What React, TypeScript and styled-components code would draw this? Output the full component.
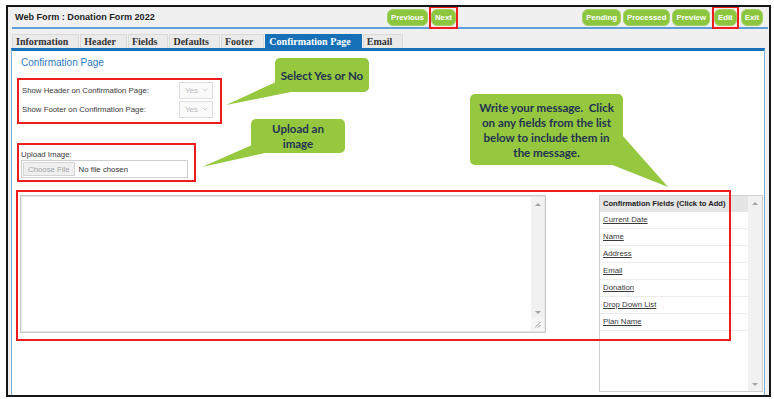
import React from 'react';
import styled, { createGlobalStyle } from 'styled-components';
import { ChevronDown } from 'lucide-react';

const GlobalStyle = createGlobalStyle`
  html, body {
    margin: 0;
    padding: 0;
    background: #fff;
  }
  body {
    font-family: 'Liberation Sans', Arial, sans-serif;
  }
`;

const Frame = styled.div`
  box-sizing: border-box;
  width: 765px;
  height: 392px;
  margin: 5px 0 0 6px;
  border: 2px solid #161616;
  background: #f0f0f0;
  overflow: hidden;
  display: flex;
  flex-direction: column;
`;

const TopBar = styled.div`
  display: flex;
  align-items: center;
  height: 20px;
  margin: 0 1px 0 4px;
  padding-right: 5px;
  border-bottom: 2px solid #5d9fd6;
`;

const FormTitle = styled.div`
  box-sizing: border-box;
  flex: 0 0 375px;
  padding-left: 3px;
  font-size: 9.1px;
  font-weight: bold;
  color: #1d1d1d;
`;

const ButtonGroup = styled.div<{ $gap?: number; $push?: boolean }>`
  display: flex;
  align-items: center;
  gap: ${(p) => p.$gap ?? 2}px;
  margin-left: ${(p) => (p.$push ? 'auto' : '0')};
`;

const GreenButton = styled.span`
  display: inline-flex;
  align-items: center;
  box-sizing: border-box;
  height: 17px;
  padding: 0 3px;
  border-radius: 6px;
  background: #8cc63f;
  border: 1px solid #a6d267;
  color: #fff;
  font-size: 7.8px;
  font-weight: bold;
`;

const Marked = styled.span`
  display: inline-flex;
  padding: 1px 0;
  border: 2px solid #ee1d1d;
`;

const Tabs = styled.div`
  display: flex;
  margin: 5px 0 0 4px;
`;

const Tab = styled.div<{ $active?: boolean }>`
  height: 14px;
  line-height: 14px;
  padding: 0 10px 0 3px;
  margin-right: 1px;
  box-sizing: border-box;
  background: ${(p) => (p.$active ? '#1570b8' : '#eaeaea')};
  border: 1px solid ${(p) => (p.$active ? '#1570b8' : '#dadada')};
  border-bottom: none;
  color: ${(p) => (p.$active ? '#fff' : '#333')};
  font-family: 'Liberation Serif', 'Times New Roman', serif;
  font-weight: bold;
  font-size: 10px;
`;

const Panel = styled.div`
  position: relative;
  flex: 1;
  margin: 0 4px 0 3px;
  background: #fff;
  border-top: 3px solid #1570b8;
  border-left: 1px solid #7cb3de;
  border-right: 1px solid #7cb3de;
  display: flex;
  flex-direction: column;
`;

const PageTitle = styled.div`
  margin: 6px 0 9px 9px;
  font-size: 10px;
  line-height: 12px;
  color: #2f7bbf;
`;

const Annotated = styled.div<{ $w: number; $h: number }>`
  box-sizing: border-box;
  width: ${(p) => p.$w}px;
  height: ${(p) => p.$h}px;
  margin-left: 5px;
  border: 2px solid #ee1d1d;
`;

const SettingsBox = styled(Annotated)`
  padding: 1px 7px 0 3px;
  display: flex;
  flex-direction: column;
  gap: 1px;
`;

const SettingRow = styled.div`
  display: flex;
  align-items: center;
  height: 18px;
`;

const Label = styled.span`
  flex: 1;
  font-size: 7.8px;
  color: #3a3a3a;
`;

const SelectBox = styled.div`
  box-sizing: border-box;
  width: 34px;
  height: 17px;
  display: flex;
  align-items: center;
  justify-content: space-between;
  padding: 0 3px 0 5px;
  border: 1px solid #dedede;
  background: #fafafa;
  font-size: 8px;
  color: #b8b8b8;
`;

const UploadBox = styled(Annotated)`
  margin-top: 19px;
  padding: 4px 0 0 2px;
`;

const UploadLabel = styled.div`
  font-size: 7.8px;
  line-height: 11px;
  color: #3a3a3a;
`;

const FileInput = styled.div`
  box-sizing: border-box;
  width: 167px;
  height: 18px;
  display: flex;
  align-items: center;
  gap: 4px;
  border: 1px solid #cfcfcf;
  padding: 0 1px;
  font-size: 7.8px;
  color: #333;
`;

const FileButton = styled.span`
  box-sizing: border-box;
  height: 14px;
  display: inline-flex;
  align-items: center;
  padding: 0 4px;
  border: 1px solid #d4d4d4;
  background: #efefef;
  color: #a4a4a4;
`;

const BottomRow = styled.div`
  position: relative;
  flex: 1;
  display: flex;
  align-items: flex-start;
  margin-top: 13px;
`;

const BigMark = styled.div`
  position: absolute;
  left: 4px;
  top: -5px;
  width: 715px;
  height: 151px;
  box-sizing: border-box;
  border: 2px solid #ee1d1d;
  pointer-events: none;
`;

const MessageArea = styled.div`
  box-sizing: border-box;
  width: 526px;
  height: 138px;
  margin-left: 8px;
  border: 1px solid #c9c9c9;
  box-shadow: inset 0 0 0 1px #e8e8e8;
  display: flex;
  justify-content: flex-end;
  padding: 1px;
`;

const ScrollTrack = styled.div`
  width: 13px;
  background: #f1f1f1;
  display: flex;
  flex-direction: column;
  align-items: center;
  justify-content: space-between;
  padding-top: 6px;
  box-sizing: border-box;
`;

const Arrow = styled.span<{ $down?: boolean }>`
  width: 0;
  height: 0;
  border-left: 3px solid transparent;
  border-right: 3px solid transparent;
  ${(p) => (p.$down ? 'border-top: 3px solid #a3a3a3;' : 'border-bottom: 3px solid #a3a3a3;')}
`;

const ScrollBottom = styled.div`
  display: flex;
  flex-direction: column;
  align-items: center;
  gap: 4px;
`;

const GripCell = styled.div`
  width: 13px;
  height: 13px;
  background: #f6f6f6;
  display: flex;
  align-items: center;
  justify-content: center;
`;

const FieldList = styled.div`
  box-sizing: border-box;
  width: 164px;
  height: 197px;
  margin: 0 1px 0 auto;
  border: 1px solid #cfcfcf;
  display: flex;
`;

const FieldBody = styled.div`
  flex: 1;
  display: flex;
  flex-direction: column;
`;

const FieldHeader = styled.div`
  height: 16px;
  line-height: 16px;
  padding-left: 3px;
  background: #e5e5e5;
  font-size: 7.6px;
  font-weight: bold;
  color: #222;
  white-space: nowrap;
`;

const FieldRow = styled.div`
  height: 16px;
  line-height: 15px;
  padding-left: 3px;
  border-bottom: 1px solid #ececec;
  font-size: 7.8px;
  color: #3a3a3a;
  text-decoration: underline;
`;

const ListScroll = styled(ScrollTrack)`
  width: 14px;
  padding: 6px 0 5px;
`;

const Callout = styled.div<{ $x: number; $y: number; $w: number; $h: number }>`
  position: absolute;
  left: ${(p) => p.$x}px;
  top: ${(p) => p.$y}px;
  width: ${(p) => p.$w}px;
  height: ${(p) => p.$h}px;
  background: #95c83f;
  border-radius: 5px;
  display: flex;
  align-items: center;
  justify-content: center;
  z-index: 2;
`;

const CalloutText = styled.div`
  position: relative;
  font-family: Lato, 'Open Sans', sans-serif;
  font-weight: bold;
  font-size: 11.5px;
  line-height: 15px;
  color: #1f3251;
  text-align: center;
  white-space: pre;
`;

const Tail = styled.svg`
  position: absolute;
  left: 0;
  top: 0;
  overflow: visible;
`;

const fields = ['Current Date', 'Name', 'Address', 'Email', 'Donation', 'Drop Down List', 'Plan Name'];
const tabs = ['Information', 'Header', 'Fields', 'Defaults', 'Footer', 'Confirmation Page', 'Email'];

const Bubble = ({ x, y, w, h, tail, text }: { x: number; y: number; w: number; h: number; tail: string; text: string }) => (
  <Callout $x={x} $y={y} $w={w} $h={h}>
    <Tail width="1" height="1">
      <polygon points={tail} fill="#95c83f" />
    </Tail>
    <CalloutText>{text}</CalloutText>
  </Callout>
);

const App = () => {
  return (
    <>
      <GlobalStyle />
      <Frame>
        <TopBar>
          <FormTitle>Web Form : Donation Form 2022</FormTitle>
          <ButtonGroup $gap={1}>
            <GreenButton>Previous</GreenButton>
            <Marked>
              <GreenButton>Next</GreenButton>
            </Marked>
          </ButtonGroup>
          <ButtonGroup $push $gap={2}>
            <GreenButton>Pending</GreenButton>
            <GreenButton>Processed</GreenButton>
            <GreenButton>Preview</GreenButton>
            <Marked>
              <GreenButton>Edit</GreenButton>
            </Marked>
            <GreenButton>Exit</GreenButton>
          </ButtonGroup>
        </TopBar>

        <Tabs>
          {tabs.map((t) => (
            <Tab key={t} $active={t === 'Confirmation Page'}>{t}</Tab>
          ))}
        </Tabs>

        <Panel>
          <PageTitle>Confirmation Page</PageTitle>

          <SettingsBox $w={205} $h={46}>
            <SettingRow>
              <Label>Show Header on Confirmation Page:</Label>
              <SelectBox>Yes<ChevronDown size={8} strokeWidth={2} /></SelectBox>
            </SettingRow>
            <SettingRow>
              <Label>Show Footer on Confirmation Page:</Label>
              <SelectBox>Yes<ChevronDown size={8} strokeWidth={2} /></SelectBox>
            </SettingRow>
          </SettingsBox>

          <UploadBox $w={179} $h={39}>
            <UploadLabel>Upload Image:</UploadLabel>
            <FileInput>
              <FileButton>Choose File</FileButton>
              No file chosen
            </FileInput>
          </UploadBox>

          <BottomRow>
            <MessageArea>
              <ScrollTrack>
                <Arrow />
                <ScrollBottom>
                  <Arrow $down />
                  <GripCell>
                    <svg width="7" height="7" viewBox="0 0 7 7">
                      <path d="M1 6.5 L6.5 1 M4 6.5 L6.5 4" stroke="#8a8a8a" strokeWidth="0.9" />
                    </svg>
                  </GripCell>
                </ScrollBottom>
              </ScrollTrack>
            </MessageArea>
            <FieldList>
              <FieldBody>
                <FieldHeader>Confirmation Fields (Click to Add)</FieldHeader>
                {fields.map((f) => (
                  <FieldRow key={f}>{f}</FieldRow>
                ))}
              </FieldBody>
              <ListScroll>
                <Arrow />
                <Arrow $down />
              </ListScroll>
            </FieldList>
            <BigMark />
          </BottomRow>

          <Bubble x={263} y={7} w={94} h={34} tail="1,24 -49,47 16,34 16,28" text="Select Yes or No" />
          <Bubble x={239} y={68} w={94} h={34} tail="1,26 -49,48 14,34 14,28" text={'Upload an\nimage'} />
          <Bubble
            x={458}
            y={43}
            w={153}
            h={71}
            tail="152,41 198,93 140,70 140,60"
            text={'Write your message.  Click\non any fields from the list\nbelow to include them in\nthe message.'}
          />
        </Panel>
      </Frame>
    </>
  );
};

export default App;
